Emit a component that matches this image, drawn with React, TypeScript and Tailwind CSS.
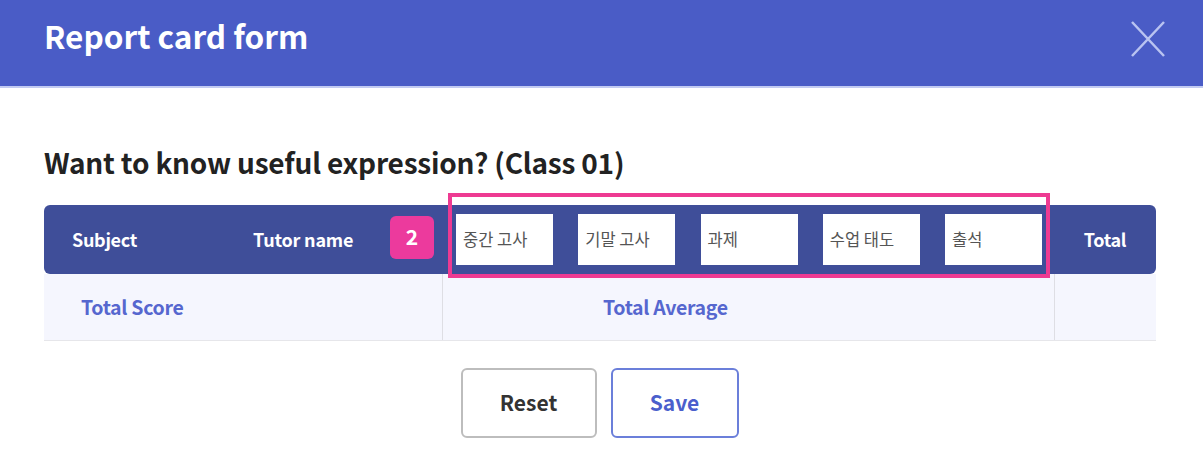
const font = { fontFamily: '"Noto Sans CJK KR", "Noto Sans", sans-serif' };

const subjects = ["중간 고사", "기말 고사", "과제", "수업 태도", "출석"];

export default function App() {
  return (
    <div className="w-[1203px] h-[458px] bg-white overflow-hidden" style={font}>
      <div className="h-[88px] bg-[#4a5cc6] border-b-2 border-[#c2cbf2] flex items-center justify-between pl-[44px] pr-[38px]">
        <h1 className="text-[31.5px] font-bold text-white leading-none -mt-[14px]">Report card form</h1>
        <button className="w-[34px] h-[36px] -mt-[8px]">
          <svg viewBox="0 0 34 36" className="w-[34px] h-[36px]" fill="none" stroke="#b9c3f1" strokeWidth="2.5">
            <path d="M1 1 L33 35 M33 1 L1 35" />
          </svg>
        </button>
      </div>

      <div className="px-[44px] pt-[55px]">
        <h2 className="text-[28px] font-bold text-[#222] leading-[38px] tracking-[-0.2px]">
          Want to know useful expression? (Class 01)
        </h2>

        <div className="mt-[24px] w-[1112px]">
          <div className="h-[69px] bg-[#3f4e99] rounded-[6px] flex items-center text-white font-bold text-[18px]">
            <div className="w-[209px] pl-[28px] tracking-[-0.3px]">Subject</div>
            <div className="w-[137px] tracking-[-0.2px]">Tutor name</div>
            <div className="w-[44px] h-[43px] -mt-[5px] rounded-[6px] bg-[#ec3a9d] flex items-center justify-center text-[21px]">
              2
            </div>
            <div className="ml-[14px] self-start -mt-[12px] w-[602px] h-[85px] border-4 border-[#ee3a92] px-[4px] pt-[17px] flex justify-between">
              {subjects.map((s) => (
                <div
                  key={s}
                  className="w-[97px] h-[51px] bg-white flex items-center pl-[7px] text-[16.5px] font-normal text-[#555]"
                >
                  {s}
                </div>
              ))}
            </div>
            <div className="flex-1 text-center pl-[4px] tracking-[-0.3px]">Total</div>
          </div>

          <div className="h-[67px] bg-[#f5f6fe] border-b border-[#e6e6ea] flex text-[19.5px] font-semibold text-[#5667cf]">
            <div className="w-[399px] border-r border-[#dedee4] flex items-center pl-[37px] tracking-[-0.3px]">Total Score</div>
            <div className="w-[612px] border-r border-[#dedee4] flex items-center pl-[160px] tracking-[-0.3px]">Total Average</div>
            <div className="flex-1" />
          </div>
        </div>

        <div className="mt-[27px] flex justify-center gap-[14px] pr-[4px]">
          <button className="w-[136px] h-[70px] rounded-[6px] border-2 border-[#bdbdbd] bg-white text-[21px] font-bold text-[#333]">
            Reset
          </button>
          <button className="w-[128px] h-[70px] rounded-[6px] border-2 border-[#6b7fda] bg-white text-[21px] font-bold text-[#4b5fcc]">
            Save
          </button>
        </div>
      </div>
    </div>
  );
}
